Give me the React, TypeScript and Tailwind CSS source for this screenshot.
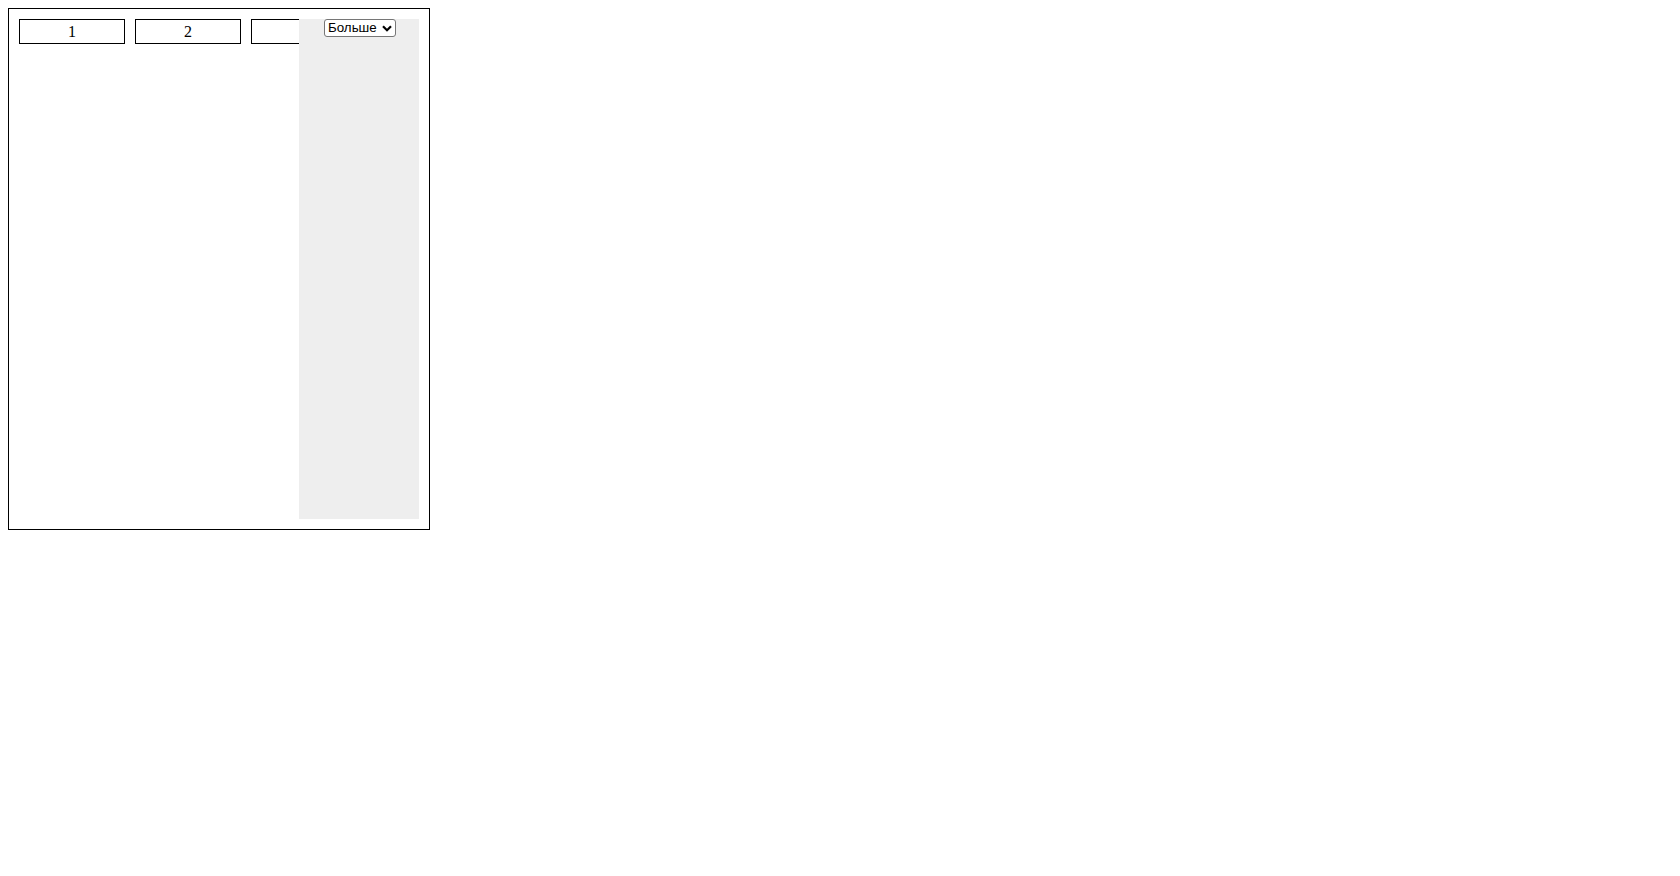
export default function App() {
  const items = ["1", "2", "3"];

  return (
    <div className="p-2 bg-white min-h-screen" style={{ fontFamily: '"Liberation Serif", serif' }}>
      <div className="relative w-[422px] h-[522px] border border-black p-[10px] text-black">
        {/* Tabs row */}
        <div className="flex gap-[10px]">
          {items.map((item) => (
            <div
              key={item}
              className="w-[106px] h-[25px] border border-black flex items-center justify-center text-[16px] leading-none"
            >
              {item}
            </div>
          ))}
        </div>

        {/* Overflow panel */}
        <div className="absolute top-[10px] right-[10px] w-[120px] h-[500px] bg-[#eeeeee] flex justify-center items-start">
          <div className="relative flex h-[18px] w-[72px] ml-[2px]">
            <select
              defaultValue="more"
              className="block appearance-none h-[18px] w-[72px] border border-[#767676] rounded-[3px] bg-white pl-[3px] pr-[14px] py-0 text-[13.33px] leading-[16px] text-black"
              style={{ fontFamily: '"Liberation Sans", Arial, sans-serif' }}
            >
              <option value="more">Больше</option>
            </select>
            <svg
              className="absolute right-[4px] top-[6px] pointer-events-none"
              width="10"
              height="7"
              viewBox="0 0 10 7"
            >
              <path d="M1 1.2 L5 5.2 L9 1.2" fill="none" stroke="#000" strokeWidth="2.2" />
            </svg>
          </div>
        </div>
      </div>
    </div>
  );
}
